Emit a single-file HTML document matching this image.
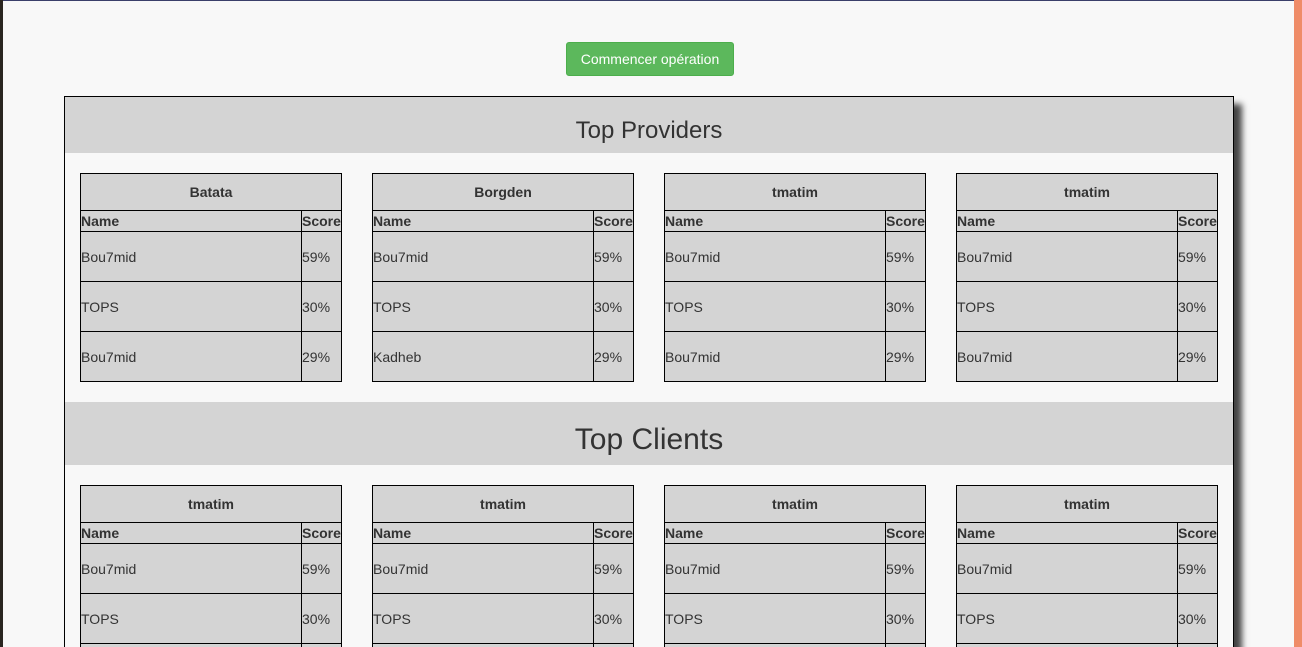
<!DOCTYPE html>
<html style="overflow:hidden;height:647px"><head><style>
body{margin:0;width:1302px;height:647px;overflow:hidden;background:#f8f8f8;font-family:"Liberation Sans",sans-serif;color:#333}
#w{position:relative;width:1302px;height:647px;overflow:hidden}
.topline{position:absolute;left:0;top:0;width:1294px;height:1px;background:#3a3f6a}
.lstrip{position:absolute;left:0;top:0;width:3px;height:647px;background:#2a2520}
.orange{position:absolute;left:1294px;top:0;width:8px;height:647px;background:#ef8c68}
.btn{position:absolute;left:566px;top:42px;width:166px;height:32px;background:#5cb85c;border:1px solid #4cae4c;border-radius:3px;color:#fff;font-size:14px;line-height:32px;text-align:center}
.box{position:absolute;left:64px;top:96px;width:1168px;height:550px;border:1px solid #000;border-bottom:none;background:#f8f8f8;box-shadow:8px 8px 6px #444}
.band{position:absolute;left:0;width:1168px;background:#d4d4d4;text-align:center}
table{position:absolute;border-collapse:collapse;width:262px;font-size:14px;background:#d4d4d4}
td,th{border:1px solid #000;padding:0;text-align:left}
th.cap{height:36px;text-align:center;font-weight:bold}
tr.h td{font-weight:bold;height:20px}
tr.r td{height:49px}
td.s{width:39px}
</style></head><body>
<div id="w">
<div class="topline"></div><div class="lstrip"></div><div class="orange"></div>
<div class="btn">Commencer opération</div>
<div class="box">
<div class="band" style="top:0;height:56px;line-height:67px;font-size:24px">Top Providers</div>
<div class="band" style="top:305px;height:63px;line-height:76px;font-size:30px">Top Clients</div>
</div>
<div id="t"></div>
</div>
<script>
function tb(x,y,title,names){return `<table style="left:${x}px;top:${y}px"><tr><th colspan=2 class=cap>${title}</th></tr><tr class=h><td>Name</td><td class=s>Score</td></tr>`+
names.map((n,i)=>`<tr class=r><td>${n}</td><td class=s>${['59%','30%','29%'][i]}</td></tr>`).join('')+`</table>`}
let h='';const xs=[80,372,664,956];
const t1=['Batata','Borgden','tmatim','tmatim'];
xs.forEach((x,i)=>{h+=tb(x,173,t1[i],['Bou7mid','TOPS',i==1?'Kadheb':'Bou7mid']);h+=tb(x,485,'tmatim',['Bou7mid','TOPS','Bou7mid']);});
document.getElementById('t').innerHTML=h;
</script>
</body></html>
